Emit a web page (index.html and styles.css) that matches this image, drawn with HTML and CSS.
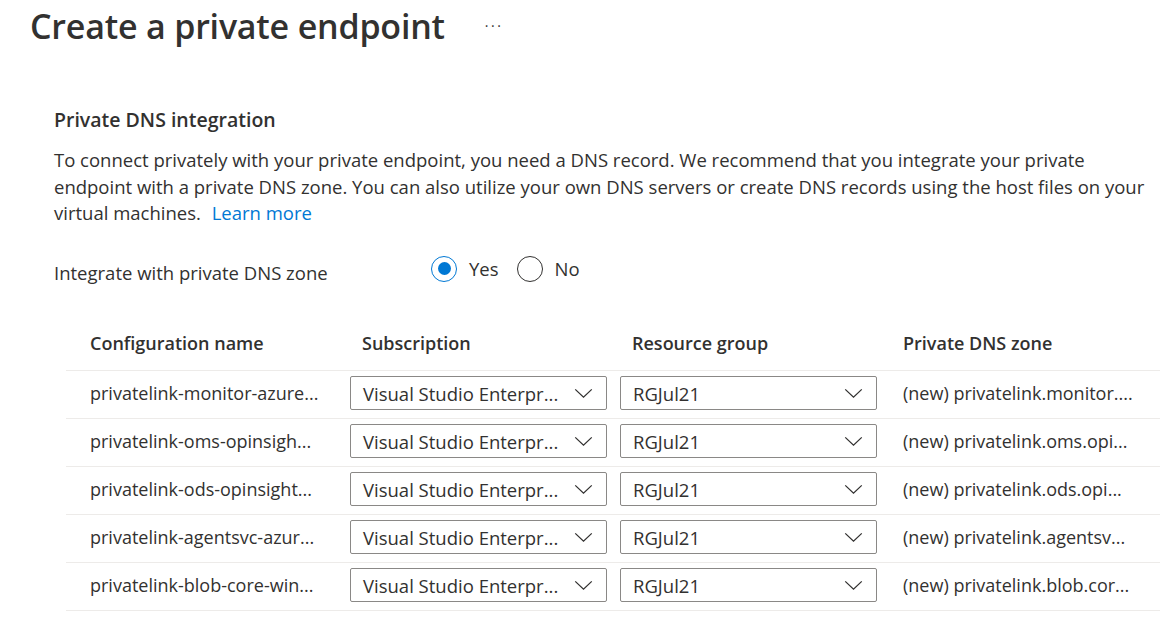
FILE: index.html
```html
<!DOCTYPE html>
<html>
<head>
<meta charset="utf-8">
<link rel="stylesheet" href="styles.css">
</head>
<body>
<header class="page-header">
  <h1 class="title">Create a private endpoint</h1>
  <span class="more">···</span>
</header>
<main class="content">
  <h2 class="section-title">Private DNS integration</h2>
  <p class="desc">To connect privately with your private endpoint, you need a DNS record. We recommend that you integrate your private<br>endpoint with a private DNS zone. You can also utilize your own DNS servers or create DNS records using the host files on your<br>virtual machines. <a class="link" href="#">Learn more</a></p>
  <div class="field">
    <span class="field-label">Integrate with private DNS zone</span>
    <div class="radios">
      <label class="radio"><span class="circle checked"></span>Yes</label>
      <label class="radio"><span class="circle"></span>No</label>
    </div>
  </div>
  <div class="table">
    <div class="row head">
      <div class="cell">Configuration name</div>
      <div class="cell pad">Subscription</div>
      <div class="cell pad">Resource group</div>
      <div class="cell">Private DNS zone</div>
    </div>
    <div class="row">
      <div class="cell">privatelink-monitor-azure...</div>
      <div class="cell"><div class="dropdown"><span>Visual Studio Enterpr...</span><svg class="chev" viewBox="0 0 20 12"><path d="M1 1.5 L10 10 L19 1.5"/></svg></div></div>
      <div class="cell"><div class="dropdown"><span>RGJul21</span><svg class="chev" viewBox="0 0 20 12"><path d="M1 1.5 L10 10 L19 1.5"/></svg></div></div>
      <div class="cell">(new) privatelink.monitor....</div>
    </div>
    <div class="row">
      <div class="cell">privatelink-oms-opinsigh...</div>
      <div class="cell"><div class="dropdown"><span>Visual Studio Enterpr...</span><svg class="chev" viewBox="0 0 20 12"><path d="M1 1.5 L10 10 L19 1.5"/></svg></div></div>
      <div class="cell"><div class="dropdown"><span>RGJul21</span><svg class="chev" viewBox="0 0 20 12"><path d="M1 1.5 L10 10 L19 1.5"/></svg></div></div>
      <div class="cell">(new) privatelink.oms.opi...</div>
    </div>
    <div class="row">
      <div class="cell">privatelink-ods-opinsight...</div>
      <div class="cell"><div class="dropdown"><span>Visual Studio Enterpr...</span><svg class="chev" viewBox="0 0 20 12"><path d="M1 1.5 L10 10 L19 1.5"/></svg></div></div>
      <div class="cell"><div class="dropdown"><span>RGJul21</span><svg class="chev" viewBox="0 0 20 12"><path d="M1 1.5 L10 10 L19 1.5"/></svg></div></div>
      <div class="cell">(new) privatelink.ods.opi...</div>
    </div>
    <div class="row">
      <div class="cell">privatelink-agentsvc-azur...</div>
      <div class="cell"><div class="dropdown"><span>Visual Studio Enterpr...</span><svg class="chev" viewBox="0 0 20 12"><path d="M1 1.5 L10 10 L19 1.5"/></svg></div></div>
      <div class="cell"><div class="dropdown"><span>RGJul21</span><svg class="chev" viewBox="0 0 20 12"><path d="M1 1.5 L10 10 L19 1.5"/></svg></div></div>
      <div class="cell">(new) privatelink.agentsv...</div>
    </div>
    <div class="row">
      <div class="cell">privatelink-blob-core-win...</div>
      <div class="cell"><div class="dropdown"><span>Visual Studio Enterpr...</span><svg class="chev" viewBox="0 0 20 12"><path d="M1 1.5 L10 10 L19 1.5"/></svg></div></div>
      <div class="cell"><div class="dropdown"><span>RGJul21</span><svg class="chev" viewBox="0 0 20 12"><path d="M1 1.5 L10 10 L19 1.5"/></svg></div></div>
      <div class="cell">(new) privatelink.blob.cor...</div>
    </div>
  </div>
</main>
</body>
</html>
```

FILE: styles.css
```css
* { box-sizing: border-box; }
body {
  margin: 0;
  background: #ffffff;
  color: #323130;
  font-family: "Open Sans", "Noto Sans", "Liberation Sans", sans-serif;
  width: 1165px;
  height: 644px;
  overflow: hidden;
}
.page-header {
  display: flex;
  align-items: center;
  height: 52px;
  padding-left: 30px;
}
.title {
  margin: 0;
  font-size: 34px;
  font-weight: 600;
  letter-spacing: -0.2px;
  line-height: 52px;
}
.more {
  margin-left: 40px;
  font-size: 14px;
  color: #323130;
  letter-spacing: 2.5px;
  margin-top: -2px;
}
.content {
  padding-left: 54px;
  padding-top: 55px;
}
.section-title {
  margin: 0;
  font-size: 19.5px;
  font-weight: 600;
  line-height: 26px;
}
.desc {
  margin: 14px 0 0;
  font-size: 18.5px;
  line-height: 26.5px;
  white-space: nowrap;
}
.link {
  color: #0078d4;
  text-decoration: none;
  margin-left: 6px;
}
.field {
  display: flex;
  align-items: center;
  margin-top: 25px;
  height: 34px;
}
.field-label {
  width: 377px;
  font-size: 18.5px;
  padding-top: 8px;
}
.radios {
  display: flex;
  gap: 18px;
  font-size: 18.5px;
}
.radio {
  display: flex;
  align-items: center;
  gap: 12px;
}
.circle {
  width: 26px;
  height: 26px;
  border-radius: 50%;
  border: 1.3px solid #323130;
  display: flex;
  align-items: center;
  justify-content: center;
}
.circle.checked {
  border-color: #0078d4;
}
.circle.checked::after {
  content: "";
  width: 13px;
  height: 13px;
  border-radius: 50%;
  background: #0078d4;
}
.table {
  margin-left: 12px;
  margin-top: 36px;
  width: 1094px;
}
.row {
  display: grid;
  grid-template-columns: 260px 270px 283px 1fr;
  align-items: center;
  padding-left: 24px;
  padding-bottom: 2px;
  height: 48px;
  border-bottom: 1px solid #edebe9;
  font-size: 18px;
  white-space: nowrap;
}
.row.head {
  height: 49px;
  padding-bottom: 6px;
  font-weight: 600;
}
.cell.pad { padding-left: 12px; }
.dropdown {
  display: flex;
  align-items: center;
  justify-content: space-between;
  width: 257px;
  height: 34px;
  border: 1px solid #8a8886;
  border-radius: 2px;
  padding: 0 12px;
  font-size: 18.5px;
}
.chev {
  width: 19px;
  height: 11px;
  fill: none;
  stroke: #323130;
  stroke-width: 1.4;
  margin-right: 1px;
}
```
